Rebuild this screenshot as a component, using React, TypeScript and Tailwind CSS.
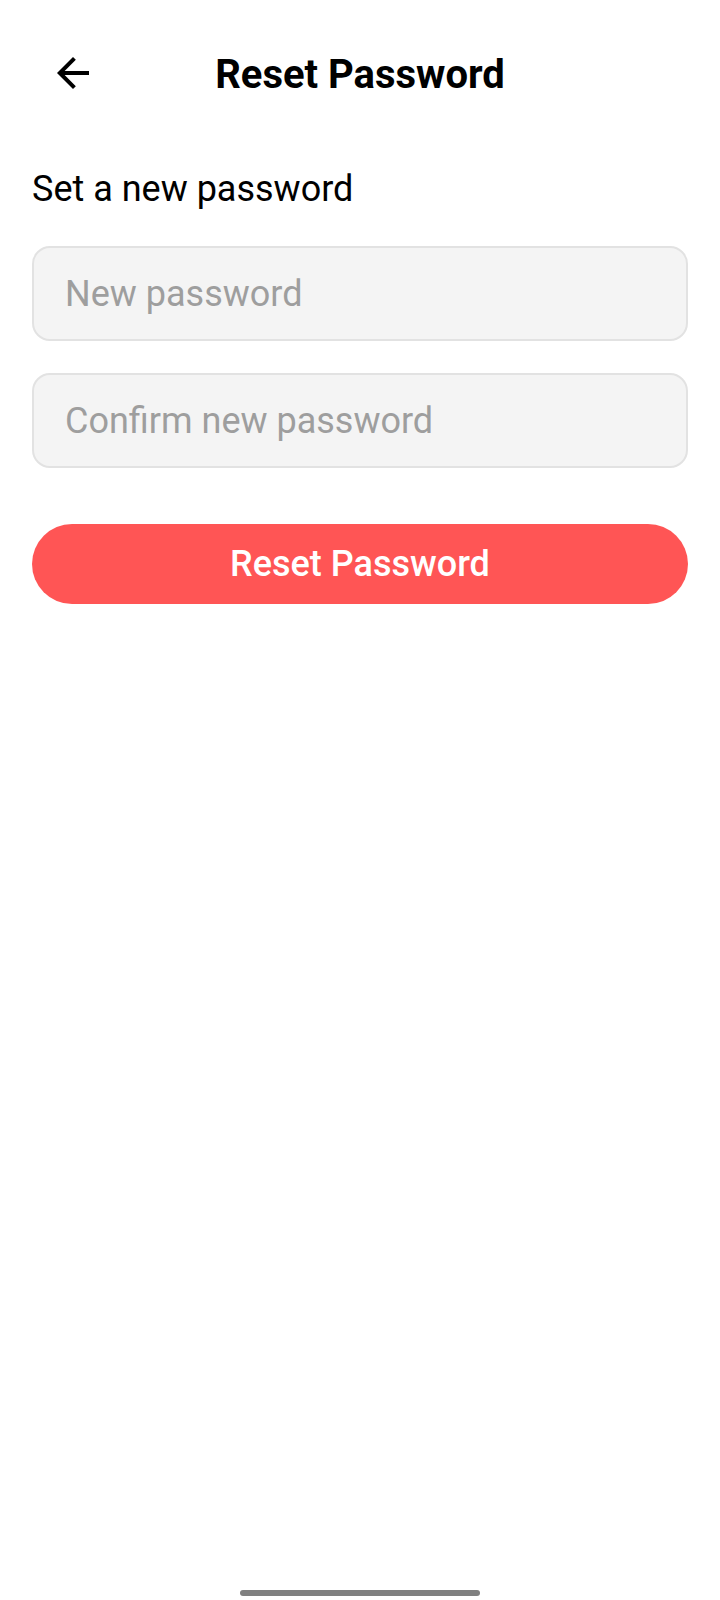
import { useState } from "react";

function BackArrow() {
  return (
    <svg width="48" height="48" viewBox="0 0 24 24" fill="currentColor">
      <path d="M20 11H7.83l5.59-5.59L12 4l-8 8 8 8 1.41-1.41L7.83 13H20v-2z" />
    </svg>
  );
}

export default function App() {
  const [pw, setPw] = useState("");
  const [confirm, setConfirm] = useState("");

  return (
    <div className="relative flex min-h-[1600px] w-full flex-col bg-white font-['Roboto',sans-serif] text-black">
      <header className="relative flex h-[150px] items-center justify-center">
        <button className="absolute left-[49px] top-[49px] text-black">
          <BackArrow />
        </button>
        <h1 className="text-[40px] font-bold">Reset Password</h1>
      </header>

      <main className="flex flex-col px-8">
        <p className="mt-[19px] text-[36px] leading-[40px]">Set a new password</p>

        <div className="mt-[37px] flex flex-col gap-[32px]">
          <input
            type="password"
            value={pw}
            onChange={(e) => setPw(e.target.value)}
            placeholder="New password"
            className="h-[95px] w-full rounded-[18px] border-2 border-[#e2e2e2] bg-[#f4f4f4] px-[31px] text-[36px] outline-none placeholder:text-[#9e9e9e]"
          />
          <input
            type="password"
            value={confirm}
            onChange={(e) => setConfirm(e.target.value)}
            placeholder="Confirm new password"
            className="h-[95px] w-full rounded-[18px] border-2 border-[#e2e2e2] bg-[#f4f4f4] px-[31px] text-[36px] outline-none placeholder:text-[#9e9e9e]"
          />
        </div>

        <button className="mt-[56px] h-[80px] w-full rounded-full bg-[#ff5555] text-[36px] font-medium text-white">
          Reset Password
        </button>
      </main>

      <div className="absolute bottom-[4px] left-1/2 h-[6px] w-[240px] -translate-x-1/2 rounded-full bg-[#808080]" />
    </div>
  );
}
